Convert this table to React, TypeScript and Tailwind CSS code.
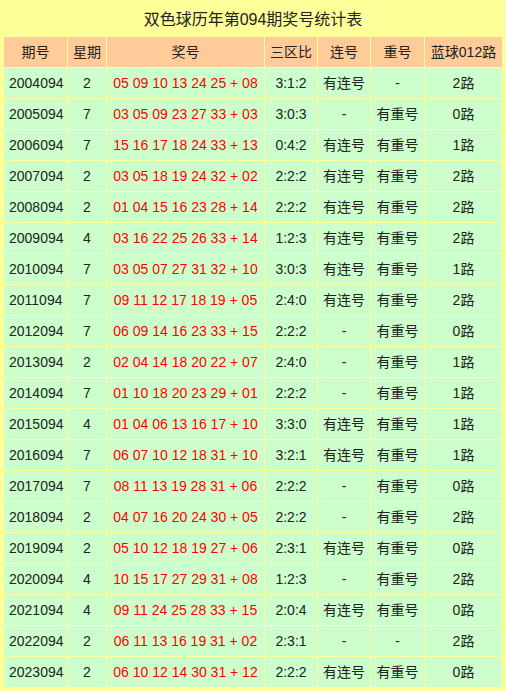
import React from "react";

const rows: string[][] = [
  ["2004094", "2", "05 09 10 13 24 25 + 08", "3:1:2", "有连号", "-", "2路"],
  ["2005094", "7", "03 05 09 23 27 33 + 03", "3:0:3", "-", "有重号", "0路"],
  ["2006094", "7", "15 16 17 18 24 33 + 13", "0:4:2", "有连号", "有重号", "1路"],
  ["2007094", "2", "03 05 18 19 24 32 + 02", "2:2:2", "有连号", "有重号", "2路"],
  ["2008094", "2", "01 04 15 16 23 28 + 14", "2:2:2", "有连号", "有重号", "2路"],
  ["2009094", "4", "03 16 22 25 26 33 + 14", "1:2:3", "有连号", "有重号", "2路"],
  ["2010094", "7", "03 05 07 27 31 32 + 10", "3:0:3", "有连号", "有重号", "1路"],
  ["2011094", "7", "09 11 12 17 18 19 + 05", "2:4:0", "有连号", "有重号", "2路"],
  ["2012094", "7", "06 09 14 16 23 33 + 15", "2:2:2", "-", "有重号", "0路"],
  ["2013094", "2", "02 04 14 18 20 22 + 07", "2:4:0", "-", "有重号", "1路"],
  ["2014094", "7", "01 10 18 20 23 29 + 01", "2:2:2", "-", "有重号", "1路"],
  ["2015094", "4", "01 04 06 13 16 17 + 10", "3:3:0", "有连号", "有重号", "1路"],
  ["2016094", "7", "06 07 10 12 18 31 + 10", "3:2:1", "有连号", "有重号", "1路"],
  ["2017094", "7", "08 11 13 19 28 31 + 06", "2:2:2", "-", "有重号", "0路"],
  ["2018094", "2", "04 07 16 20 24 30 + 05", "2:2:2", "-", "有重号", "2路"],
  ["2019094", "2", "05 10 12 18 19 27 + 06", "2:3:1", "有连号", "有重号", "0路"],
  ["2020094", "4", "10 15 17 27 29 31 + 08", "1:2:3", "-", "有重号", "2路"],
  ["2021094", "4", "09 11 24 25 28 33 + 15", "2:0:4", "有连号", "有重号", "0路"],
  ["2022094", "2", "06 11 13 16 19 31 + 02", "2:3:1", "-", "-", "2路"],
  ["2023094", "2", "06 10 12 14 30 31 + 12", "2:2:2", "有连号", "有重号", "0路"],
];

const headers = ["期号", "星期", "奖号", "三区比", "连号", "重号", "蓝球012路"];

export default function App() {
  return (
    <div
      className="w-[506px] h-[691px] bg-[#ffff99] px-[4px] pb-[4px] text-[#222222]"
      style={{ fontFamily: '"Liberation Sans", Arial, "Noto Sans CJK SC", sans-serif' }}
    >
      <div className="h-[37px] flex items-center justify-center text-[16px] pt-[2px]">
        双色球历年第094期奖号统计表
      </div>
      <div className="grid grid-cols-[63px_38px_157px_52px_52px_53px_77px] gap-[1px] text-[14px]">
        {headers.map((h) => (
          <div key={h} className="h-[30px] bg-[#ffcc99] flex items-center justify-center">
            {h}
          </div>
        ))}
        {rows.map((r) =>
          r.map((c, i) => (
            <div
              key={r[0] + i}
              className={
                "h-[30px] bg-[#ccffcc] flex items-center " +
                (i === 0 ? "justify-start pl-[5px] " : "justify-center ") +
                (i === 2 ? "text-[#ff0000]" : "")
              }
            >
              {c}
            </div>
          ))
        )}
      </div>
    </div>
  );
}
